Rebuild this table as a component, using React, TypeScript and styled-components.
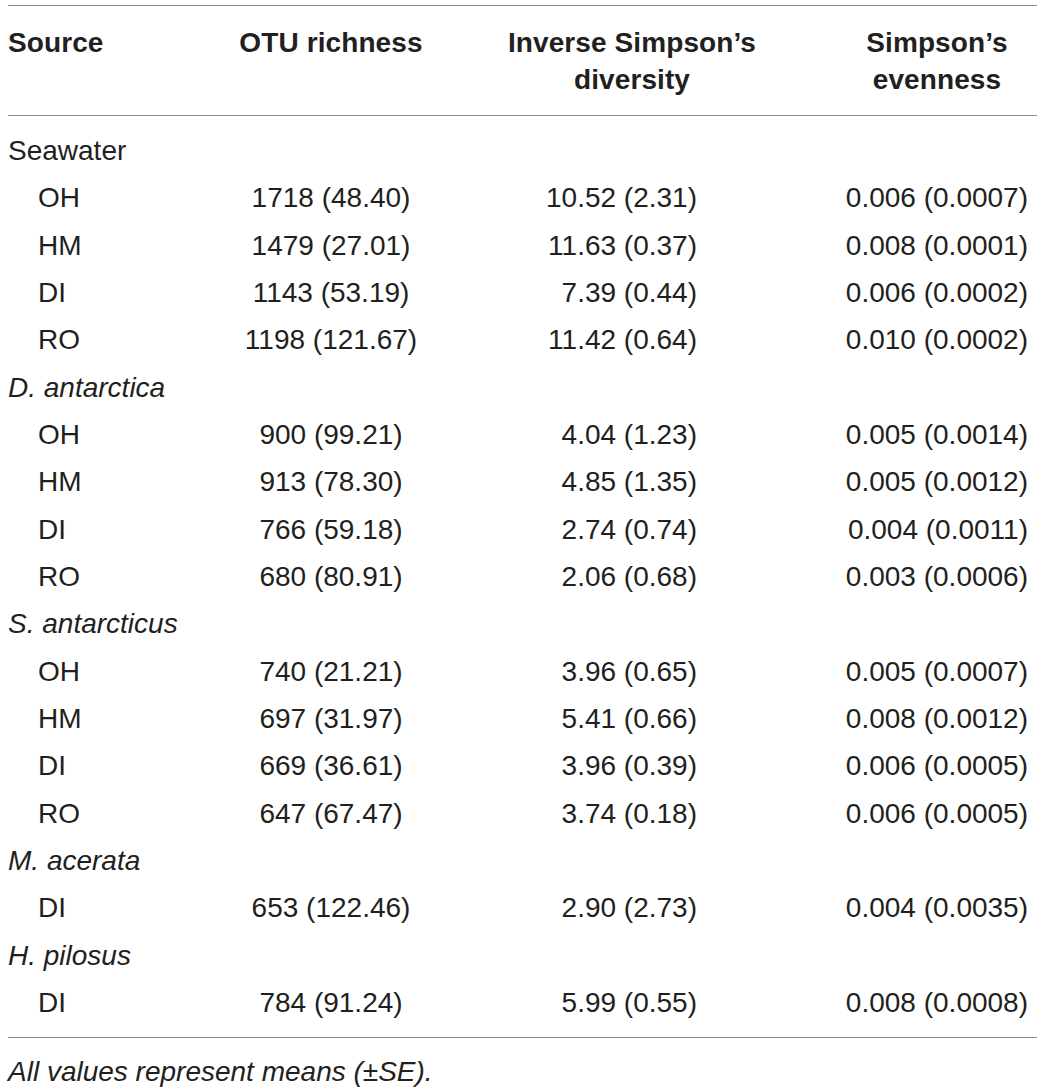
import React from "react";
import styled, { createGlobalStyle } from "styled-components";

const GlobalStyle = createGlobalStyle`
  html, body {
    margin: 0;
    padding: 0;
    background: #ffffff;
  }
  body {
    font-family: "Liberation Sans", Arial, Helvetica, sans-serif;
    color: #231f20;
  }
`;

type Row =
  | { kind: "group"; label: string; italic?: boolean }
  | { kind: "item"; site: string; otu: string; inv: string; even: string };

const rows: Row[] = [
  { kind: "group", label: "Seawater" },
  { kind: "item", site: "OH", otu: "1718 (48.40)", inv: "10.52 (2.31)", even: "0.006 (0.0007)" },
  { kind: "item", site: "HM", otu: "1479 (27.01)", inv: "11.63 (0.37)", even: "0.008 (0.0001)" },
  { kind: "item", site: "DI", otu: "1143 (53.19)", inv: "7.39 (0.44)", even: "0.006 (0.0002)" },
  { kind: "item", site: "RO", otu: "1198 (121.67)", inv: "11.42 (0.64)", even: "0.010 (0.0002)" },
  { kind: "group", label: "D. antarctica", italic: true },
  { kind: "item", site: "OH", otu: "900 (99.21)", inv: "4.04 (1.23)", even: "0.005 (0.0014)" },
  { kind: "item", site: "HM", otu: "913 (78.30)", inv: "4.85 (1.35)", even: "0.005 (0.0012)" },
  { kind: "item", site: "DI", otu: "766 (59.18)", inv: "2.74 (0.74)", even: "0.004 (0.0011)" },
  { kind: "item", site: "RO", otu: "680 (80.91)", inv: "2.06 (0.68)", even: "0.003 (0.0006)" },
  { kind: "group", label: "S. antarcticus", italic: true },
  { kind: "item", site: "OH", otu: "740 (21.21)", inv: "3.96 (0.65)", even: "0.005 (0.0007)" },
  { kind: "item", site: "HM", otu: "697 (31.97)", inv: "5.41 (0.66)", even: "0.008 (0.0012)" },
  { kind: "item", site: "DI", otu: "669 (36.61)", inv: "3.96 (0.39)", even: "0.006 (0.0005)" },
  { kind: "item", site: "RO", otu: "647 (67.47)", inv: "3.74 (0.18)", even: "0.006 (0.0005)" },
  { kind: "group", label: "M. acerata", italic: true },
  { kind: "item", site: "DI", otu: "653 (122.46)", inv: "2.90 (2.73)", even: "0.004 (0.0035)" },
  { kind: "group", label: "H. pilosus", italic: true },
  { kind: "item", site: "DI", otu: "784 (91.24)", inv: "5.99 (0.55)", even: "0.008 (0.0008)" },
];

const Page = styled.div`
  padding: 5px 5px 0 8px;
  width: 1029px;
`;

const Table = styled.div`
  display: grid;
  grid-template-columns: 224px 198px 404px 203px;
  font-size: 28px;
`;

const Head = styled.div<{ $align?: string; $shift?: number }>`
  font-weight: 700;
  line-height: 37px;
  padding: 18px 0 17px ${({ $shift }) => $shift ?? 0}px;
  text-align: ${({ $align }) => $align ?? "center"};
  border-top: 1px solid #8e8e8e;
  border-bottom: 1px solid #8e8e8e;
  letter-spacing: 0.1px;
`;

const Body = styled.div`
  grid-column: 1 / -1;
  display: grid;
  grid-template-columns: subgrid;
  padding: 11px 0 11px;
  border-bottom: 1px solid #8e8e8e;
`;

const Cell = styled.div<{ $align?: string; $right?: number; $indent?: boolean; $italic?: boolean }>`
  line-height: 47.33px;
  height: 47.33px;
  white-space: nowrap;
  text-align: ${({ $align }) => $align ?? "left"};
  padding-right: ${({ $right }) => $right ?? 0}px;
  padding-left: ${({ $indent }) => ($indent ? 30 : 0)}px;
  font-style: ${({ $italic }) => ($italic ? "italic" : "normal")};
`;

const GroupCell = styled(Cell)`
  grid-column: 1 / -1;
`;

const Note = styled.div`
  font-size: 28px;
  font-style: italic;
  line-height: 47px;
  padding-top: 10px;
`;

export default function App() {
  return (
    <Page>
      <GlobalStyle />
      <Table>
        <Head $align="left">Source</Head>
        <Head>OTU richness</Head>
        <Head>
          Inverse Simpson’s
          <br />
          diversity
        </Head>
        <Head $shift={3}>
          Simpson’s
          <br />
          evenness
        </Head>
        <Body>
          {rows.map((r, i) =>
            r.kind === "group" ? (
              <GroupCell key={i} $italic={r.italic}>
                {r.label}
              </GroupCell>
            ) : (
              <React.Fragment key={i}>
                <Cell $indent>{r.site}</Cell>
                <Cell $align="center">{r.otu}</Cell>
                <Cell $align="right" $right={137}>
                  {r.inv}
                </Cell>
                <Cell $align="right" $right={9}>
                  {r.even}
                </Cell>
              </React.Fragment>
            )
          )}
        </Body>
      </Table>
      <Note>All values represent means (±SE).</Note>
    </Page>
  );
}
